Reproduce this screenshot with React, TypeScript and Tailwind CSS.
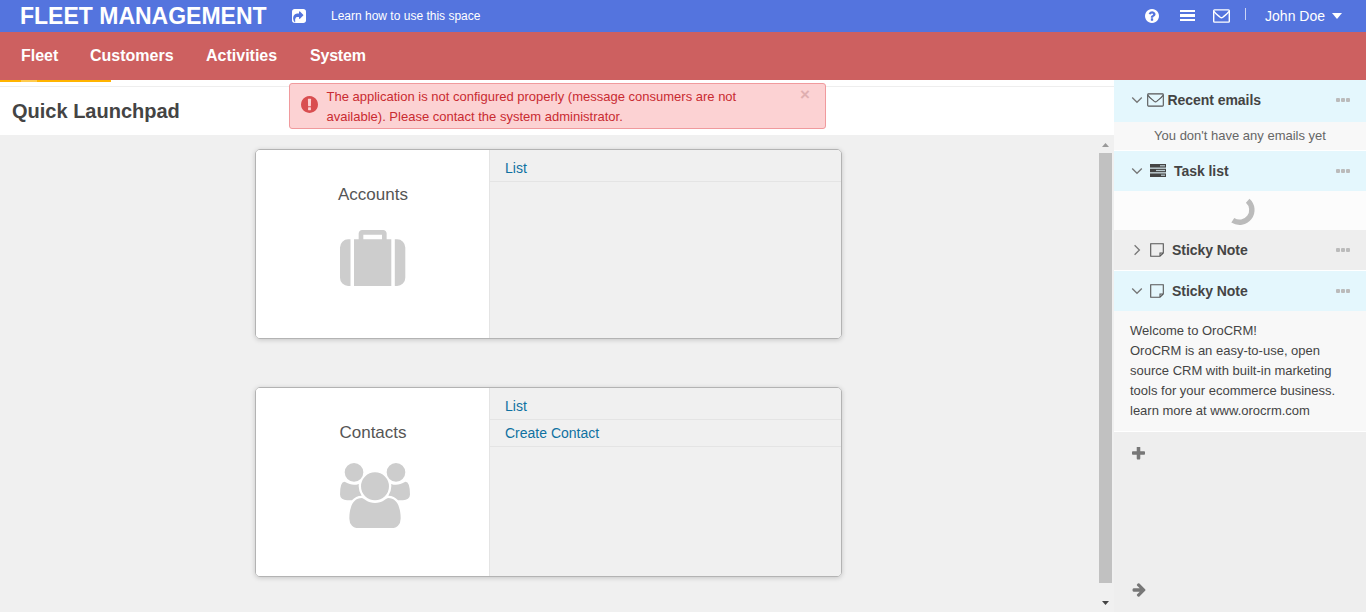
import React from 'react';

const FONT = "font-['Liberation_Sans',Arial,sans-serif]";

const PATHS = {
  users:
    'M657 896q-162 5-265 128h-134q-82 0-138-40.5t-56-118.5q0-353 124-353 6 0 43.5 21t97.5 42.5 119 21.5q67 0 133-23-5 37-5 66 0 139 81 256zm1071 637q0 120-73 189.5t-194 69.5h-874q-121 0-194-69.5t-73-189.5q0-53 3.5-103.5t14-109 26.5-108.5 43-97.5 62-81 85.5-53.5 111.5-20q10 0 43 21.5t73 48 107 48 135 21.5 135-21.5 107-48 73-48 43-21.5q61 0 111.5 20t85.5 53.5 62 81 43 97.5 26.5 108.5 14 109 3.5 103.5zm-1024-1277q0 106-75 181t-181 75-181-75-75-181 75-181 181-75 181 75 75 181zm704 384q0 159-112.5 271.5t-271.5 112.5-271.5-112.5-112.5-271.5 112.5-271.5 271.5-112.5 271.5 112.5 112.5 271.5zm576 225q0 78-56 118.5t-138 40.5h-134q-103-123-265-128 81-117 81-256 0-29-5-66 66 23 133 23 59 0 119-21.5t97.5-42.5 43.5-21q124 0 124 353zm-128-609q0 106-75 181t-181 75-181-75-75-181 75-181 181-75 181 75 75 181z',
  suitcase:
    'M640 384h512v-128h-512v128zm-352 0v1280h-64q-92 0-158-66t-66-158v-832q0-92 66-158t158-66h64zm1120 0v1280h-1024v-1280h128v-160q0-40 28-68t68-28h576q40 0 68 28t28 68v160h128zm384 224v832q0 92-66 158t-158 66h-64v-1280h64q92 0 158 66t66 158z',
  question:
    'M1024 1376v-192q0-14-9-23t-23-9h-192q-14 0-23 9t-9 23v192q0 14 9 23t23 9h192q14 0 23-9t9-23zm256-672q0-88-55.5-163t-138.5-116-170-41q-243 0-371 213-15 24 8 42l132 100q7 6 19 6 16 0 25-12 53-68 86-92 34-24 86-24 48 0 85.5 26t37.5 59q0 38-20 61t-68 45q-63 28-115.5 86.5t-52.5 125.5v36q0 14 9 23t23 9h192q14 0 23-9t9-23q0-19 21.5-49.5t54.5-49.5q32-18 49-28.5t46-35 44.5-48 28-60.5 12.5-81zm384 192q0 209-103 385.5t-279.5 279.5-385.5 103-385.5-103-279.5-279.5-103-385.5 103-385.5 279.5-279.5 385.5-103 385.5 103 279.5 279.5 103 385.5z',
  alert:
    'M896 128q209 0 385.5 103t279.5 279.5 103 385.5-103 385.5-279.5 279.5-385.5 103-385.5-103-279.5-279.5-103-385.5 103-385.5 279.5-279.5 385.5-103zm128 1247v-190q0-14-9-23.5t-22-9.5h-192q-13 0-23 10t-10 23v190q0 13 10 23t23 10h192q13 0 22-9.5t9-23.5zm-2-344l18-621q0-12-10-18-10-8-24-8h-220q-14 0-24 8-10 6-10 18l17 621q0 10 10 17.5t24 7.5h185q14 0 23.5-7.5t10.5-17.5z',
  share:
    'M1005 1197l352-352q19-19 19-45t-19-45l-352-352q-30-31-69-14-40 17-40 59v160q-119 0-216 19.5t-162.5 51-114 79-76.5 95.5-44.5 109-21.5 111.5-5 110.5q0 181 167 404 11 12 25 12 7 0 13-3 22-9 19-33-44-354 62-473 46-52 130-75.5t224-23.5v160q0 42 40 59 12 5 24 5 26 0 45-19zm659-781v960q0 119-84.5 203.5t-203.5 84.5h-960q-119 0-203.5-84.5t-84.5-203.5v-960q0-119 84.5-203.5t203.5-84.5h960q119 0 203.5 84.5t84.5 203.5z',
  plus: 'M1600 736v192q0 40-28 68t-68 28h-416v416q0 40-28 68t-68 28h-192q-40 0-68-28t-28-68v-416h-416q-40 0-68-28t-28-68v-192q0-40 28-68t68-28h416v-416q0-40 28-68t68-28h192q40 0 68 28t28 68v416h416q40 0 68 28t28 68z',
  arrow:
    'M1600 960q0 54-37 91l-651 651q-39 37-91 37-51 0-90-37l-75-75q-38-38-38-91t38-91l293-293h-704q-52 0-84.5-37.5t-32.5-90.5v-128q0-53 32.5-90.5t84.5-37.5h704l-293-294q-38-36-38-90t38-90l75-75q38-38 90-38 53 0 91 38l651 651q37 35 37 90z',
};

function Glyph({ d, box, className }: { d: string; box: string; className: string }) {
  return (
    <svg viewBox={box} className={`shrink-0 ${className}`} fill="currentColor">
      <path d={d} />
    </svg>
  );
}

function Envelope({ className, strokeWidth }: { className: string; strokeWidth: number }) {
  return (
    <svg viewBox="0 0 17 14" className={`h-[14px] w-[17px] shrink-0 ${className}`} fill="none" stroke="currentColor" strokeWidth={strokeWidth}>
      <rect x="0.7" y="0.9" width="15.6" height="12.2" rx="0.8" />
      <path d="M1 2.4C2.6 4.8 5.3 6.6 7.2 8.3Q8.5 9.4 9.8 8.3C11.7 6.6 14.4 4.8 16 2.4" />
    </svg>
  );
}

function TaskIcon() {
  return (
    <svg viewBox="0 0 16 13" className="mb-px h-[13px] w-4 shrink-0 text-[#444]" fill="none">
      <rect width="16" height="3.6" y="0" fill="currentColor" />
      <rect width="16" height="3.6" y="4.7" fill="currentColor" />
      <rect width="16" height="3.6" y="9.4" fill="currentColor" />
      <rect x="10" y="1.2" width="5" height="1.2" fill="#b9c9ce" />
      <rect x="6" y="5.9" width="9" height="1.2" fill="#b9c9ce" />
      <rect x="11" y="10.6" width="4" height="1.2" fill="#b9c9ce" />
    </svg>
  );
}

function NoteIcon() {
  return (
    <svg viewBox="0 0 14 14" className="h-[14px] w-[14px] shrink-0 text-[#555]" fill="none" stroke="currentColor" strokeWidth="1.1">
      <path d="M0.7 0.7H13.3V10L10 13.3H0.7ZM13.3 10H10V13.3" />
    </svg>
  );
}

function Chevron({ open }: { open: boolean }) {
  return (
    <svg viewBox="0 0 12 12" className="mb-px h-3 w-3 shrink-0 text-[#777]" fill="none" stroke="currentColor" strokeWidth="1.3">
      <path d={open ? 'M1.2 3.5L6 8.3L10.8 3.5' : 'M3.6 1.2L8.4 6L3.6 10.8'} />
    </svg>
  );
}

function Dots() {
  return (
    <span className="ml-auto flex gap-px">
      <i className="h-1 w-1 rounded-[1px] bg-[#bbb]" />
      <i className="h-1 w-1 rounded-[1px] bg-[#bbb]" />
      <i className="h-1 w-1 rounded-[1px] bg-[#bbb]" />
    </span>
  );
}

function WidgetHead({ open = true, title, className, children }: { open?: boolean; title: string; className: string; children: React.ReactNode }) {
  return (
    <div className={`flex items-center pr-4 pl-[17px] ${className}`}>
      <Chevron open={open} />
      {children}
      <b className="text-[14px] leading-5 tracking-[-0.05px] text-[#444]">{title}</b>
      <Dots />
    </div>
  );
}

function Card({ title, icon, links }: { title: string; icon: React.ReactNode; links: string[] }) {
  return (
    <section className="flex h-[190px] w-[587px] overflow-hidden rounded-[5px] border border-[#b3b3b3] shadow-[0_1px_5px_rgba(0,0,0,0.18)]">
      <div className="flex w-[234px] flex-col items-center border-r border-[#e4e4e4] bg-white pt-[35px] pl-px">
        <h2 className="text-[17px] leading-5 text-[#555]">{title}</h2>
        {icon}
      </div>
      <ul className="flex-1 bg-[#f0f0f0] pt-[5px]">
        {links.map((l) => (
          <li key={l} className="h-[27px] border-b border-[#e4e4e4] pl-[15px] text-[14px] leading-[26px] text-[#0f71a1]">
            {l}
          </li>
        ))}
      </ul>
    </section>
  );
}

export default function App() {
  return (
    <div className={`relative flex h-[612px] w-[1366px] flex-col overflow-hidden bg-white ${FONT}`}>
      <header className="flex h-8 shrink-0 items-center bg-[#5474de] pr-6 pl-5 text-white">
        <h1 className="w-[272px] text-[23px] leading-8 font-bold whitespace-nowrap">FLEET MANAGEMENT</h1>
        <Glyph d={PATHS.share} box="128 128 1536 1536" className="mb-px h-[14px] w-[14px]" />
        <span className="ml-[25px] text-[12px]">Learn how to use this space</span>
        <Glyph d={PATHS.question} box="128 128 1536 1536" className="mb-px ml-auto h-[14px] w-[14px]" />
        <span className="mb-px ml-[21px] flex w-[15px] flex-col gap-[2px]">
          <i className="h-[2.5px] bg-white" />
          <i className="h-[2.5px] bg-white" />
          <i className="h-[2.5px] bg-white" />
        </span>
        <Envelope className="ml-[18px]" strokeWidth={1.4} />
        <i className="mb-1 ml-[15px] h-3 w-px bg-white/70" />
        <span className="ml-[19px] text-[14px]">John Doe</span>
        <svg viewBox="0 0 10 6" className="ml-[7px] h-[6px] w-[10px]" fill="currentColor">
          <path d="M0 0H10L5 6Z" />
        </svg>
      </header>
      <nav className="flex h-12 shrink-0 items-center bg-[#cd6060] pl-[21px] text-[16px] font-bold text-white">
        <span className="w-[69px]">Fleet</span>
        <span className="w-[116px]">Customers</span>
        <span className="w-[104px]">Activities</span>
        <span className="tracking-[-0.2px]">System</span>
      </nav>

      <div className="flex min-h-0 flex-1">
        <div className="flex w-[1114px] flex-col">
          <div className="flex h-[7px] items-start border-b border-[#eee]">
            <i className="h-[2px] w-[21px] bg-[#ffb400]" />
            <i className="h-[2px] w-4 bg-[#ffcb4d]" />
            <i className="h-[2px] w-[74px] bg-[#ffb400]" />
          </div>
          <h2 className="h-12 pl-3 text-[20px] leading-[48px] font-bold text-[#444]">Quick Launchpad</h2>
          <div className="flex flex-1 bg-[#f0f0f0]">
            <main className="flex w-[1099px] flex-col gap-12 pt-[14px] pl-[255px]">
              <Card
                title="Accounts"
                links={['List']}
                icon={<Glyph d={PATHS.suitcase} box="0 128 1792 1536" className="mt-[24.5px] h-[56px] w-[65.3px] text-[#cdcdcd]" />}
              />
              <Card
                title="Contacts"
                links={['List', 'Create Contact']}
                icon={<Glyph d={PATHS.users} box="64 0 1920 1792" className="mt-[19.5px] ml-[4px] h-[65.3px] w-[70px] text-[#cdcdcd]" />}
              />
            </main>
            <div className="flex w-[13px] flex-col items-center">
              <svg viewBox="0 0 7 4" className="mt-2 h-1 w-[7px]" fill="#999">
                <path d="M0 4L3.5 0L7 4Z" />
              </svg>
              <i className="mt-[6px] h-[430px] w-full bg-[#c1c1c1]" />
              <svg viewBox="0 0 7 4" className="mt-[18px] h-1 w-[7px]" fill="#444">
                <path d="M0 0L3.5 4L7 0Z" />
              </svg>
            </div>
          </div>
        </div>

        <aside className="flex w-[252px] flex-col bg-[#eee]">
          <WidgetHead title="Recent emails" className="h-[42px] bg-[#e4f7fd] pb-[2px]">
            <Envelope className="mr-1 ml-[3.5px] text-[#555]" strokeWidth={1.1} />
          </WidgetHead>
          <p className="h-[29px] border-b border-white bg-[#f8f8f8] text-center text-[13px] leading-[27px] text-[#666]">You don't have any emails yet</p>
          <WidgetHead title="Task list" className="h-10 bg-[#e4f7fd]">
            <span className="mr-2 ml-[7px]">
              <TaskIcon />
            </span>
          </WidgetHead>
          <div className="flex h-[39px] items-center justify-center bg-[#fcfcfc] pt-px pl-[2px]">
            <svg viewBox="0 0 30 30" className="h-[30px] w-[30px]" fill="none" stroke="#bbb" strokeWidth="5.4">
              <path d="M21.7 4.7A12.3 12.3 0 0 1 6.8 24.2" />
            </svg>
          </div>
          <WidgetHead title="Sticky Note" open={false} className="h-[41px] border-b border-white bg-[#eee]">
            <span className="mr-2 ml-[7px]">
              <NoteIcon />
            </span>
          </WidgetHead>
          <WidgetHead title="Sticky Note" className="h-10 bg-[#e4f7fd]">
            <span className="mr-2 ml-[7px]">
              <NoteIcon />
            </span>
          </WidgetHead>
          <p className="h-[121px] border-b border-white bg-[#f8f8f8] pt-[10px] pl-4 text-[13px] leading-5 whitespace-nowrap text-[#444]">
            Welcome to OroCRM!
            <br />
            OroCRM is an easy-to-use, open
            <br />
            source CRM with built-in marketing
            <br />
            tools for your ecommerce business.
            <br />
            learn more at www.orocrm.com
          </p>
          <div className="flex flex-1 flex-col justify-between pt-[15px] pb-[15px] pl-[17.5px] text-[#777]">
            <Glyph d={PATHS.plus} box="192 192 1408 1408" className="h-[13px] w-[13px]" />
            <Glyph d={PATHS.arrow} box="64 160 1600 1600" className="h-[14px] w-[14px]" />
          </div>
        </aside>
      </div>

      <div className="absolute top-[83px] left-[289px] flex h-[46px] w-[537px] rounded-[3px] border border-[#f09a9d] bg-[#fcd2d3] pt-[3px] pl-[10.5px] text-[#c92b31]">
        <Glyph d={PATHS.alert} box="128 128 1536 1536" className="mt-[9px] h-[17px] w-[17px] text-[#d94e50]" />
        <p className="ml-[9px] text-[13px] leading-5 whitespace-nowrap">
          The application is not configured properly (message consumers are not
          <br />
          available). Please contact the system administrator.
        </p>
        <span className="mt-[-3px] mr-[15px] ml-auto text-[17px] leading-[22px] font-bold text-[#dfafb0]">×</span>
      </div>
    </div>
  );
}
